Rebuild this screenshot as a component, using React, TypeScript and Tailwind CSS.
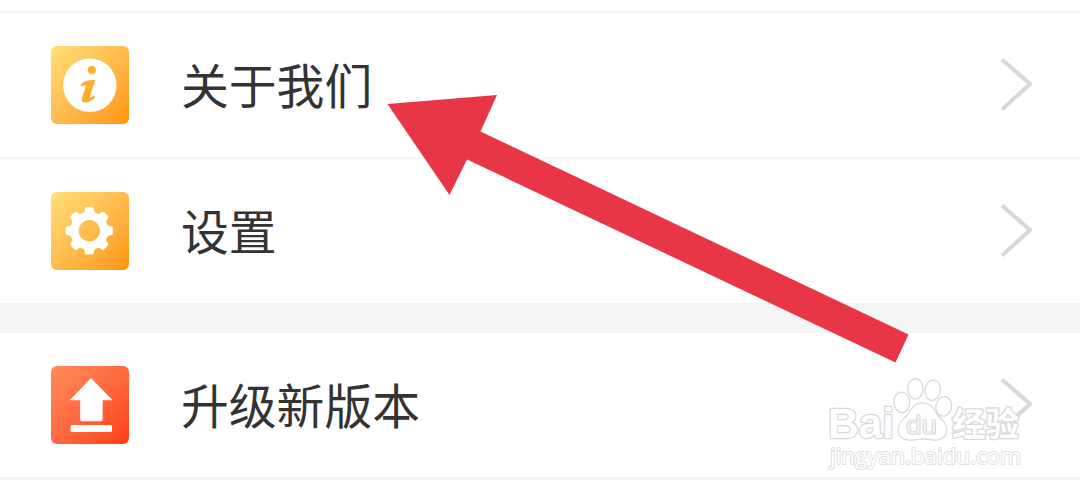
import React from 'react';

const InfoIcon = () => (
  <svg viewBox="0 0 78 78" className="w-full h-full">
    <circle cx="38.8" cy="39.2" r="26.8" fill="#fff" />
    <circle cx="40.8" cy="24" r="4.1" fill="#fcb02c" />
    <path
      d="M29.6 39.2C31.5 35.8 36 34.2 44.4 33.8L39 50.2C38.4 52 39.6 52.4 43 49.8L44.4 51.2C41 54.8 37.2 56.4 33.4 56.4C31 56.4 30.2 54.6 31 52L34.8 40.4C35.2 38.8 33.8 38.8 30.4 40.2Z"
      fill="#fcae2a"
    />
  </svg>
);

const teeth = [0, 45, 90, 135, 180, 225, 270, 315];

const GearIcon = () => (
  <svg viewBox="0 0 78 78" className="w-full h-full">
    {teeth.map((angle) => (
      <path
        key={angle}
        d="M32.6 22L34 16.4Q34.4 15.2 35.6 15.2H41Q42.2 15.2 42.6 16.4L44 22Z"
        transform={`rotate(${angle} 38.3 38.8)`}
        fill="#fff"
      />
    ))}
    <circle cx="38.3" cy="38.8" r="14.9" fill="none" stroke="#fff" strokeWidth="8.4" />
  </svg>
);

const UpgradeIcon = () => (
  <svg viewBox="0 0 78 78" className="w-full h-full">
    <path
      d="M40 12.5L60.8 33.8H51.2V53.6Q51.2 54.8 50 54.8H30.8Q29.6 54.8 29.6 53.6V33.8H19.4Z"
      fill="#fff"
      stroke="#fff"
      strokeWidth="0.8"
      strokeLinejoin="round"
    />
    <rect x="19.6" y="59" width="41.4" height="7" rx="1.2" fill="#fff" />
  </svg>
);

interface MenuRowProps {
  label: string;
  tile: string;
  children: React.ReactNode;
}

const MenuRow = ({ label, tile, children }: MenuRowProps) => (
  <div className="flex h-36 items-center bg-white pl-[51px] pr-12">
    <div className={`w-[78px] h-[78px] shrink-0 overflow-hidden rounded-[6px] bg-linear-to-br ${tile}`}>
      {children}
    </div>
    <span className="ml-[52px] pt-1.5 flex-1 text-[47.8px] leading-[72px] text-[#333] whitespace-nowrap">{label}</span>
    <svg viewBox="0 0 32 56" className="w-8 h-14 shrink-0">
      <path d="M2 2.5L30 27L2 52.5" fill="none" stroke="#d8d8d8" strokeWidth="4" />
    </svg>
  </div>
);

const Watermark = () => (
  <svg
    viewBox="0 0 240 134"
    className="absolute left-[810px] top-[360px] w-[240px] h-[134px]"
    fill="#fff"
    stroke="#d9d9d9"
    strokeWidth="2.6"
    strokeLinejoin="round"
    paintOrder="stroke"
  >
    <g fontFamily="'Liberation Sans', sans-serif" fontWeight="bold">
      <text x="18" y="78" fontSize="43" textLength="66" lengthAdjust="spacingAndGlyphs">Bai</text>
      <path d="M112.5 43.5C119 43.5 122.5 47 125.5 53C128.5 58.5 136 62 136 69.5C136 76.5 131 80 124.5 79.5C119 79 117 78.5 112.5 78.5C108 78.5 105 79.5 100 79.5C93.5 79.5 88.8 76 88.8 69C88.8 61.5 96 58.5 99.5 53C103 47 106 43.5 112.5 43.5Z" />
      <ellipse cx="91.8" cy="42.3" rx="7.3" ry="9.6" transform="rotate(-5 91.8 42.3)" />
      <ellipse cx="105.4" cy="28.8" rx="7" ry="9.6" />
      <ellipse cx="122.7" cy="30.2" rx="7" ry="9.6" transform="rotate(8 122.7 30.2)" />
      <ellipse cx="133.7" cy="46.4" rx="7.2" ry="9.2" transform="rotate(10 133.7 46.4)" />
      <text
        x="96"
        y="73.5"
        fontSize="26"
        fill="#f1f1f1"
        stroke="#c8c8c8"
        strokeWidth="1.2"
        fontWeight="normal"
        textLength="31"
        lengthAdjust="spacingAndGlyphs"
      >
        du
      </text>
    </g>
    <text
      x="142"
      y="76"
      fontSize="33"
      fontWeight="bold"
      fontFamily="'Noto Sans CJK SC', sans-serif"
      textLength="67"
      lengthAdjust="spacingAndGlyphs"
    >
      经验
    </text>
    <text
      x="20"
      y="104"
      fontSize="22"
      strokeWidth="2"
      stroke="#e0e0e0"
      fontFamily="'Open Sans', sans-serif"
      textLength="191"
      lengthAdjust="spacingAndGlyphs"
    >
      jingyan.baidu.com
    </text>
  </svg>
);

function App() {
  return (
    <div className="relative w-[1080px] h-[494px] overflow-hidden bg-white font-['Liberation_Sans','Noto_Sans_CJK_SC',sans-serif]">
      <div className="h-[11px]" />
      <div className="h-0.5 bg-[#f5f5f5]" />
      <MenuRow label="关于我们" tile="from-[#ffe078] to-[#ff9400]">
        <InfoIcon />
      </MenuRow>
      <div className="h-0.5 bg-[#f5f5f5]" />
      <MenuRow label="设置" tile="from-[#ffe078] to-[#ff9400]">
        <GearIcon />
      </MenuRow>
      <div className="h-[30px] bg-[#f5f5f5]" />
      <MenuRow label="升级新版本" tile="from-[#ff8b5c] to-[#ff3c14]">
        <UpgradeIcon />
      </MenuRow>
      <div className="h-[3px] bg-[#f5f5f5]" />

      {/* Pointer to the first entry */}
      <svg viewBox="0 0 1080 494" className="absolute inset-0 w-full h-full">
        <path d="M387.5 104L497 95L480.5 131.5L908.5 334.5L895.5 362.5L467 159.5L449.5 195Z" fill="#e93647" />
      </svg>

      <Watermark />
    </div>
  );
}

export default App;
